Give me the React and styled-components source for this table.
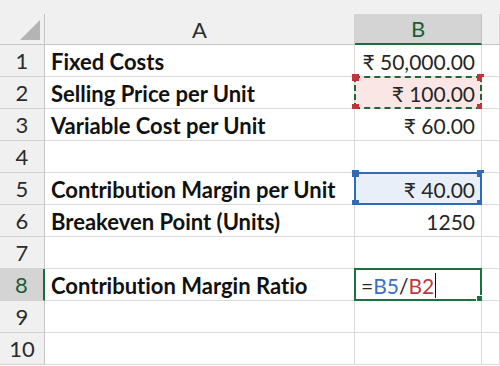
import React from 'react'
import styled, { createGlobalStyle, css } from 'styled-components'

const GlobalStyle = createGlobalStyle`
  html, body {
    margin: 0;
    padding: 0;
    background: #ffffff;
    overflow: hidden;
  }
  body {
    font-family: Lato, "Noto Sans", sans-serif;
    font-variant-ligatures: none;
  }
`

const Sheet = styled.div`
  width: 500px;
  height: 366px;
  display: grid;
  grid-template-columns: 45px 310px 127px 1fr;
  grid-template-rows: 14px 31px repeat(10, 32px);
  background: #ffffff;
  overflow: hidden;
`

const TopStrip = styled.div`
  grid-column: 1 / -1;
  background: #f0f0f0;
`

const Corner = styled.div`
  position: relative;
  background: #f0f0f0;
  border-right: 1px solid #c6c6c6;
  border-bottom: 1px solid #c6c6c6;
  box-sizing: border-box;

  &::after {
    content: '';
    position: absolute;
    right: 4px;
    bottom: 4px;
    width: 0;
    height: 0;
    border-left: 20px solid transparent;
    border-bottom: 20px solid #b4b4b4;
  }
`

const ColHead = styled.div`
  box-sizing: border-box;
  display: flex;
  align-items: center;
  justify-content: center;
  background: #f0f0f0;
  border-right: 1px solid #d2d2d2;
  border-bottom: 1px solid #c6c6c6;
  font-size: 22px;
  color: #2b2b2b;

  ${p => p.$active && css`
    background: #d4d4d4;
    color: #1b5e36;
    border-bottom: 2px solid #1e6b3e;
    border-right-color: #c2c2c2;
  `}
`

const RowHead = styled.div`
  box-sizing: border-box;
  display: flex;
  align-items: center;
  justify-content: center;
  background: #f0f0f0;
  border-right: 1px solid #c6c6c6;
  border-bottom: 1px solid #d2d2d2;
  font-size: 22px;
  color: #2b2b2b;

  ${p => p.$active && css`
    background: #d4d4d4;
    color: #1b5e36;
    border-right: 2px solid #1e6b3e;
  `}
`

const Cell = styled.div`
  position: relative;
  box-sizing: border-box;
  display: flex;
  align-items: center;
  justify-content: ${p => (p.$right ? 'flex-end' : 'flex-start')};
  padding: 1px 6px 0;
  border-right: 1px solid #dadada;
  border-bottom: 1px solid #dadada;
  font-size: ${p => (p.$bold ? '22px' : '21px')};
  font-weight: ${p => (p.$bold ? 700 : 400)};
  color: ${p => (p.$bold ? '#111111' : '#262626')};
  white-space: nowrap;
  background: ${p => p.$fill || '#ffffff'};
`

const Frame = styled.div`
  position: absolute;
  inset: -1px -1px -1px -1px;
  box-sizing: border-box;
  pointer-events: none;

  ${p => p.$kind === 'copy' && css`
    border: 2px dashed #236335;
  `}
  ${p => p.$kind === 'ref' && css`
    border: 2px solid #2f6bbd;
  `}
  ${p => p.$kind === 'edit' && css`
    border: 2px solid #1f7040;
  `}
`

const Handle = styled.span`
  position: absolute;
  width: 7px;
  height: 7px;
  background: ${p => p.$color};
  ${p => (p.$top ? 'top: -4px;' : 'bottom: -4px;')}
  ${p => (p.$left ? 'left: -4px;' : 'right: -4px;')}
`

const FillHandle = styled.span`
  position: absolute;
  right: -4px;
  bottom: -4px;
  width: 6px;
  height: 6px;
  background: #1f7040;
  border: 1px solid #ffffff;
`

const RefB5 = styled.span`
  color: #3a6fc4;
`

const RefB2 = styled.span`
  color: #c0393f;
`

const Caret = styled.span`
  display: inline-block;
  width: 1px;
  height: 25px;
  margin-left: 1px;
  background: #111111;
  vertical-align: middle;
`

const corners = [
  { top: true, left: true },
  { top: true, left: false },
  { top: false, left: true },
  { top: false, left: false },
]

const Handles = ({ color }) =>
  corners.map((c, i) => <Handle key={i} $color={color} $top={c.top} $left={c.left} />)

const rows = [
  { label: 'Fixed Costs', value: '₹ 50,000.00' },
  { label: 'Selling Price per Unit', value: '₹ 100.00', mark: 'copy' },
  { label: 'Variable Cost per Unit', value: '₹ 60.00' },
  { label: '', value: '' },
  { label: 'Contribution Margin per Unit', value: '₹ 40.00', mark: 'ref' },
  { label: 'Breakeven Point (Units)', value: '1250' },
  { label: '', value: '' },
  { label: 'Contribution Margin Ratio', mark: 'edit' },
  { label: '', value: '' },
  { label: '', value: '' },
]

const fills = { copy: '#fbe6e6', ref: '#e9eff9' }

const App = () => {
  return (
    <>
      <GlobalStyle />
      <Sheet>
        <TopStrip />
        <Corner />
        <ColHead>A</ColHead>
        <ColHead $active>B</ColHead>
        <ColHead />
        {rows.map((r, i) => (
          <React.Fragment key={i}>
            <RowHead $active={r.mark === 'edit'}>{i + 1}</RowHead>
            <Cell $bold>{r.label}</Cell>
            {r.mark === 'edit' ? (
              <Cell>
                =<RefB5>B5</RefB5>/<RefB2>B2</RefB2>
                <Caret />
                <Frame $kind="edit">
                  <FillHandle />
                </Frame>
              </Cell>
            ) : (
              <Cell $right $fill={fills[r.mark]}>
                {r.value}
                {r.mark === 'copy' && (
                  <Frame $kind="copy">
                    <Handles color="#c4333a" />
                  </Frame>
                )}
                {r.mark === 'ref' && (
                  <Frame $kind="ref">
                    <Handles color="#2f6bbd" />
                  </Frame>
                )}
              </Cell>
            )}
            <Cell />
          </React.Fragment>
        ))}
      </Sheet>
    </>
  )
}

export default App
